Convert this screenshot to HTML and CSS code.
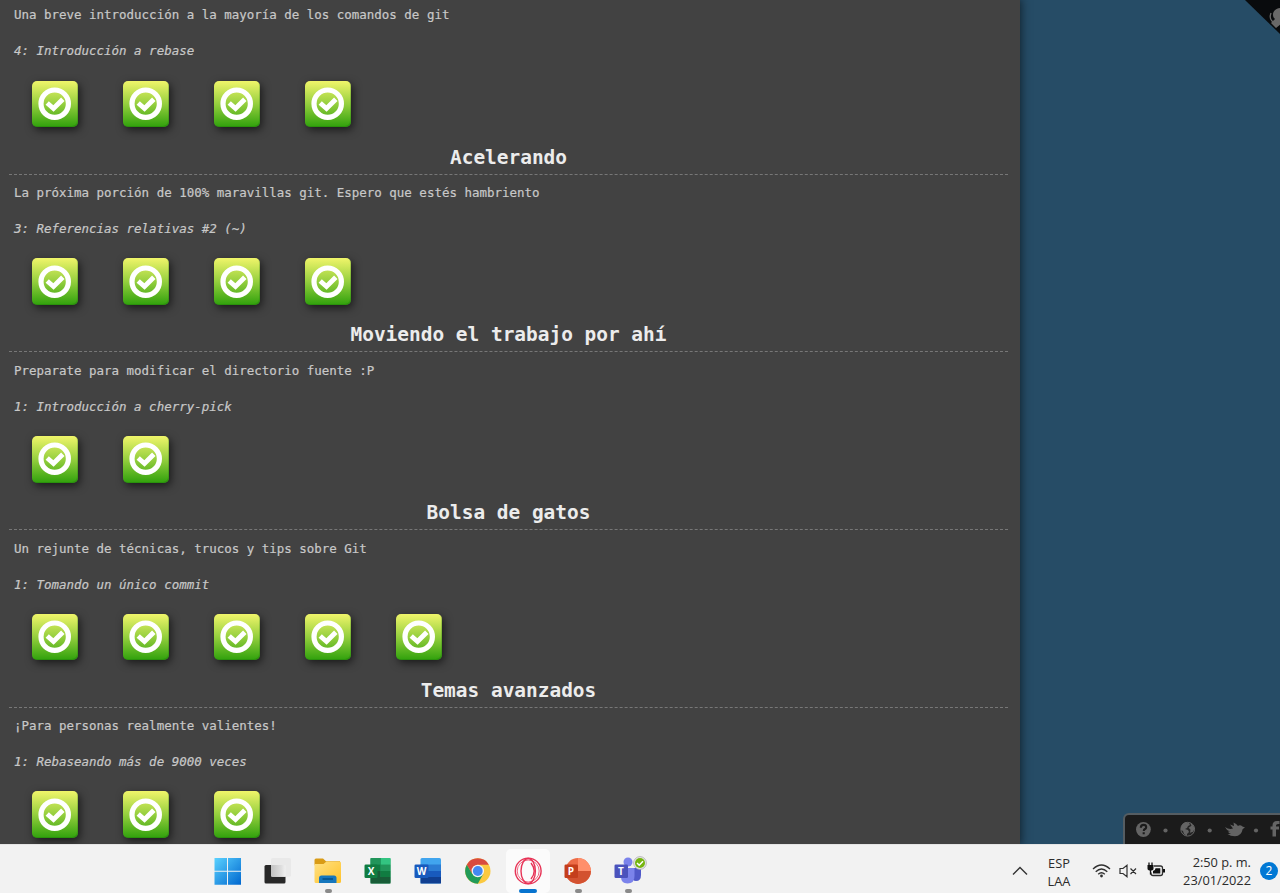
FILE: index.html
```
<!DOCTYPE html>
<html lang="es">
<head>
<meta charset="utf-8">
<title>Learn Git Branching</title>
<link rel="stylesheet" href="styles.css">
</head>
<body>
<svg class="defs" width="0" height="0">
  <symbol id="check" viewBox="0 0 34 34">
    <circle cx="16.700" cy="16.700" r="13.700" fill="none" stroke="#fff" stroke-width="5.200"/>
    <path d="M9.200 16l6.300 5.500 9.300-9.300" fill="none" stroke="#fff" stroke-width="4.900"/>
  </symbol>
</svg>
<div class="page">
  <main class="levels" id="levels">
    <section class="sequence first">
      <p class="about">Una breve introducción a la mayoría de los comandos de git</p>
      <p class="current">4: Introducción a rebase</p>
      <div class="icons"><i class="level"><svg><use href="#check"/></svg></i><i class="level"><svg><use href="#check"/></svg></i><i class="level"><svg><use href="#check"/></svg></i><i class="level"><svg><use href="#check"/></svg></i></div>
    </section>
    <section class="sequence">
      <h2>Acelerando</h2>
      <p class="about">La próxima porción de 100% maravillas git. Espero que estés hambriento</p>
      <p class="current">3: Referencias relativas #2 (~)</p>
      <div class="icons"><i class="level"><svg><use href="#check"/></svg></i><i class="level"><svg><use href="#check"/></svg></i><i class="level"><svg><use href="#check"/></svg></i><i class="level"><svg><use href="#check"/></svg></i></div>
    </section>
    <section class="sequence">
      <h2>Moviendo el trabajo por ahí</h2>
      <p class="about">Preparate para modificar el directorio fuente :P</p>
      <p class="current">1: Introducción a cherry-pick</p>
      <div class="icons"><i class="level"><svg><use href="#check"/></svg></i><i class="level"><svg><use href="#check"/></svg></i></div>
    </section>
    <section class="sequence">
      <h2>Bolsa de gatos</h2>
      <p class="about">Un rejunte de técnicas, trucos y tips sobre Git</p>
      <p class="current">1: Tomando un único commit</p>
      <div class="icons"><i class="level"><svg><use href="#check"/></svg></i><i class="level"><svg><use href="#check"/></svg></i><i class="level"><svg><use href="#check"/></svg></i><i class="level"><svg><use href="#check"/></svg></i><i class="level"><svg><use href="#check"/></svg></i></div>
    </section>
    <section class="sequence">
      <h2>Temas avanzados</h2>
      <p class="about">¡Para personas realmente valientes!</p>
      <p class="current">1: Rebaseando más de 9000 veces</p>
      <div class="icons"><i class="level"><svg><use href="#check"/></svg></i><i class="level"><svg><use href="#check"/></svg></i><i class="level"><svg><use href="#check"/></svg></i></div>
    </section>
  </main>
  <aside class="canvas">
    <svg class="ribbon" width="36" height="36" viewBox="0 0 36 36"><path d="M0 0H36V35z" fill="#090b0d"/><path d="M36 8c-5 0-8 3-8 7 0 2 1 3 2 4l-4 4 5 5 5-4z" fill="#696969"/><path d="M26 13q-2 5 1 8l3 2" fill="none" stroke="#696969" stroke-width="1.300"/></svg>
    <nav class="social">
      <svg width="155" height="30" viewBox="0 0 155 30">
        <circle cx="18.400" cy="15.500" r="7.400" fill="#646464"/>
        <path d="M15.800 13.700q0-2.800 2.800-2.800 2.600 0 2.600 2.300 0 1.200-1.500 2-.9.600-.9 1.700M18.700 18.200v2.100" fill="none" stroke="#1b1b1b" stroke-width="2.100"/>
        <circle cx="62.700" cy="15.200" r="6.900" fill="#242424" stroke="#646464" stroke-width="1"/>
        <path d="M56 13q1-4 5-5l3 1 1 2-2 1-1 2-2 1 3 1 1 2-2 2v2l-3-2-1-3-2-1zM65 8.700q4 2 4.500 6l-1.500 3-3 1 .5-3-2-2 3-2z" fill="#646464"/>
        <path d="M100 13q4 2.800 8 1.500l-3-4 4 1.500-.5-3.500q3 1 4.500 3.500 2-1.500 4.500.5l2.500 1-2.300 1.500q-1.200 7-7.700 7.300-4.500 0-7.500-2.300h3.500q-2.500-1-3-2.500h2q-3.500-1-5-4.500z" fill="#646464"/>
        <path d="M147.500 22.500v-7h-2v-3h2v-1q0-4.500 4.500-4.500h2.500v3h-1.500q-2 0-2 1.500v1h3v3h-3v7z" fill="#646464"/>
        <g fill="#646464"><circle cx="40.500" cy="16.500" r="2.100"/><circle cx="84.700" cy="16.500" r="2.100"/><circle cx="131" cy="16.500" r="2.100"/></g>
      </svg>
    </nav>
  </aside>
</div>
<footer class="taskbar">
  <div class="apps">
    <span class="app"><svg viewBox="0 0 50 42"><defs><linearGradient id="win" x2="1" y2="1"><stop stop-color="#5ad2ff"/><stop offset="1" stop-color="#0067cf"/></linearGradient></defs><path d="M12.500 8h12.500v12.700h-12.500zM26 8h13v12.700h-13zM12.500 21.700h12.500v13h-12.500zM26 21.700h13v13h-13z" fill="url(#win)"/></svg></span>
    <span class="app"><svg viewBox="0 0 50 42"><defs><linearGradient id="tv" x2="1"><stop stop-color="#c2c2c2"/><stop offset=".7" stop-color="#dedede"/><stop offset="1" stop-color="#f0f0f0"/></linearGradient></defs><rect x="12.500" y="15" width="21" height="18.500" rx="1.500" fill="#282828"/><rect x="19" y="8" width="20" height="18.700" rx="1.500" fill="#e9e9e9"/><path d="M19 15h14.500v11.700h-13q-1.500 0-1.500-1.500z" fill="url(#tv)"/></svg></span>
    <span class="app running"><svg viewBox="0 0 50 42"><defs><linearGradient id="fo" x2="1" y2="1"><stop stop-color="#ffe184"/><stop offset="1" stop-color="#ffc229"/></linearGradient></defs><path d="M12.500 10q0-1.500 1.500-1.500h7l3 2.700h14v4h-25.500z" fill="#d99b16"/><path d="M12.500 14h9l3-2.500h13q1.500 0 1.500 1.500v18.500q0 1.500-1.500 1.500h-23.500q-1.500 0-1.500-1.500z" fill="url(#fo)"/><path d="M17 33v-5q0-2.500 2.500-2.500h12.500q2.500 0 2.500 2.500v5z" fill="#1677bd"/><path d="M20.500 29h10.500" stroke="#075590" stroke-width="1.800"/></svg></span>
    <span class="app"><svg viewBox="0 0 50 42"><rect x="18.500" y="8" width="20" height="25.500" rx="1.500" fill="#20a366"/><path d="M18.500 8h10v6.500h-10zM29 14.500h9.500v6.500h-9.500z" fill="#21955a"/><path d="M29 8h9.500v6.500h-9.500z" fill="#33c481"/><path d="M18.500 14.500h10v6.500h-10zM28.500 21h10v6h-10z" fill="#107c41"/><path d="M18.500 21h10v12.500h-10zM28.500 27h10v6.500h-10z" fill="#185c37"/><rect x="12.500" y="14.500" width="13" height="13.500" rx="1.300" fill="#107c41"/><text x="19" y="25" class="tile">X</text></svg></span>
    <span class="app"><svg viewBox="0 0 50 42"><rect x="18.500" y="8" width="20.500" height="25.500" rx="1.500" fill="#41a5ee"/><path d="M18.500 14.500h20.500v7h-20.500z" fill="#2b7cd3"/><path d="M18.500 21h20.500v7h-20.500z" fill="#185abd"/><path d="M18.500 27h20.500v6.500h-20.500z" fill="#103f91"/><rect x="12.500" y="14.500" width="14" height="13.500" rx="1.300" fill="#185abd"/><text x="19.500" y="25" class="tile">W</text></svg></span>
    <span class="app"><svg viewBox="0 0 50 42"><circle cx="25.800" cy="21" r="12.700" fill="#fbc940"/><path d="M14.800 14.700A12.700 12.700 0 0 1 36.800 14.700H25.800L20.300 24z" fill="#d94b3f"/><path d="M14.800 14.700A12.700 12.700 0 0 0 25.800 33.700L31.300 24H20.300z" fill="#219b59"/><circle cx="25.800" cy="21" r="6.200" fill="#f4f4f4"/><circle cx="25.800" cy="21" r="4.900" fill="#4389f4"/></svg></span>
    <span class="app active"><svg viewBox="0 0 50 42"><g fill="none" stroke="#e73356" stroke-width="1.400"><circle cx="26.200" cy="21" r="12.900"/><circle cx="26.200" cy="21" r="11" stroke="#f16b85" stroke-width="1"/><ellipse cx="26.200" cy="21" rx="7.200" ry="12.500"/><path d="M29 13q6.500 8 0 16"/></g></svg></span>
    <span class="app running"><svg viewBox="0 0 50 42"><circle cx="26" cy="21" r="12.900" fill="#ed6c47"/><path d="M26 8.100A12.900 12.900 0 0 1 38.900 21H26z" fill="#ff8f6b"/><path d="M13.100 21h25.800A12.900 12.900 0 0 1 13.100 21z" fill="#d35230"/><rect x="12.500" y="14.500" width="13.500" height="13.500" rx="1.300" fill="#c43e1c"/><text x="19" y="25" class="tile">P</text></svg></span>
    <span class="app running"><svg viewBox="0 0 50 42"><circle cx="26" cy="12" r="4.500" fill="#7b83eb"/><path d="M31 18h8v7q0 6-5 6-4 0-4-4z" fill="#5059c9"/><path d="M19 18h13.500v8q0 7.500-7 7.500-6.500 0-6.500-7z" fill="#7b83eb"/><rect x="12.500" y="14.500" width="13.500" height="13.500" rx="1.300" fill="#4b53bc"/><text x="19" y="25" class="tile">T</text><circle cx="38" cy="13" r="6.400" fill="#e6e6e6" stroke="#a5a5a5" stroke-width=".7"/><circle cx="38" cy="13" r="5" fill="#75b50e"/><path d="M35 13l2.200 2.200 3.800-4" stroke="#fff" stroke-width="1.500" fill="none"/></svg></span>
  </div>
  <div class="tray">
    <svg class="chevron" width="16" height="10" viewBox="0 0 16 10"><path d="M1 8.500l7-7 7 7" fill="none" stroke="#333" stroke-width="1.400"/></svg>
    <div class="lang">ESP<br>LAA</div>
    <svg class="status" width="76" height="20" viewBox="0 0 76 20" fill="none" stroke="#303030" stroke-width="1.300">
      <path d="M1 8q8.500-8 17 0M3.700 10.700q5.800-5.500 11.600 0M6.200 13.300q3.300-3 6.600 0"/><circle cx="9.500" cy="15" r="1.400" fill="#303030" stroke="none"/>
      <path d="M28 7.500h3l4-3.200v11.500l-4-3.300h-3zM38.500 7.500l5.500 5.500M44 7.500l-5.500 5.500" stroke-width="1.200"/>
      <path d="M62 5h6.500q2 0 2 2v5.500q0 2-2 2h-7.500q-2 0-2-2v-1"/>
      <path d="M63.500 7.200h4.800v5.200h-7.300v-2.500q2.500-.5 2.500-2.700zM71 8h2v3.500h-2zM55.500 4h6v3.500q0 2-3 2t-3-2z" fill="#111" stroke="none"/>
      <path d="M57 1.500v3M60 1.500v3M58.500 8.500v5" stroke="#111" stroke-width="1.300"/>
    </svg>
    <div class="clock">2:50 p. m.<br>23/01/2022</div>
    <span class="count">2</span>
  </div>
</footer>
</body>
</html>
```
FILE: styles.css
```
* { box-sizing: border-box; }
body { margin: 0; width: 1280px; height: 893px; overflow: hidden; display: flex; flex-direction: column; background: #f2f2f2; }
.defs { position: absolute; }
.page { height: 844px; flex: none; display: flex; overflow: hidden; background: #264c66; }
.levels { position: relative; z-index: 1; width: 1020px; flex: none; padding: 0 12px 0 9px; background: #424242; box-shadow: 0 0 9px 1px #10212d; font-family: "DejaVu Sans Mono", monospace; color: #c8c8c8; }
.sequence { height: 177.700px; }
.sequence.first { height: 137.600px; padding-top: 1px; }
h2 { margin: 0; height: 37px; padding-top: 6px; border-bottom: 1px dashed #777; font-size: 19.450px; line-height: 28px; text-align: center; color: #ececec; }
.about, .current { margin: 0; padding-left: 5px; font-size: 12.475px; line-height: 20px; white-space: nowrap; -webkit-text-stroke: .2px #c8c8c8; }
.about { padding-top: 8.600px; }
.first .about { padding-top: 4px; }
.current { padding-top: 16px; font-style: italic; }
.icons { display: flex; gap: 45.100px; padding: 19.200px 0 0 22.700px; }
.first .icons { padding-top: 19.800px; }
.level { display: grid; place-items: center; width: 45.900px; height: 46.700px; border-radius: 5px; background: linear-gradient(#f0f56a, #95cf3e 50%, #30a10c); box-shadow: 2px 3px 9px rgba(0, 0, 0, .6), inset -1px -1px 0 rgba(20, 100, 10, .25); }
.level svg { width: 34px; height: 34px; }
.canvas { position: relative; flex: 1; }
.ribbon { position: absolute; right: 0; top: 0; transform: translateX(1px); }
.social { position: absolute; right: 0; bottom: 0; width: 157px; height: 31px; overflow: hidden; border: 2px solid #555d62; border-width: 2px 0 0 2px; border-radius: 6px 0 0 0; background: #1b1b1b; }
.social svg { display: block; margin-top: -1px; }
.taskbar { height: 49px; display: flex; background: #f2f2f2; border-top: 1px solid #e5e5e5; font-family: "Open Sans", sans-serif; color: #2b2b2b; }
.apps { display: flex; padding: 5px 0 0 202px; }
.app { position: relative; width: 50px; height: 43px; }
.app svg { display: block; width: 50px; height: 42px; position: relative; }
.app.active::before { content: ""; position: absolute; left: 4px; top: -1px; width: 44px; height: 44px; border-radius: 5px; background: #fbfbfb; }
.app.active::after, .app.running::after { content: ""; position: absolute; left: 22.500px; top: 39px; width: 7px; height: 4px; border-radius: 2px; background: #8a8a8a; }
.app.active::after { left: 17px; width: 18px; background: #0874cf; }
.tile { font: bold 10px "Open Sans", sans-serif; fill: #fff; text-anchor: middle; }
.tray { margin-left: auto; display: flex; align-items: flex-start; font-size: 12.800px; line-height: 18px; }
.chevron { margin: 21px 19px 0 0; }
.lang { width: 24px; padding-top: 9px; text-align: center; white-space: nowrap; }
.status { margin: 16px 0 0 21px; }
.clock { width: 83px; padding-top: 8px; text-align: right; white-space: nowrap; }
.count { margin: 17px 2px 0 9px; width: 18px; height: 18px; border-radius: 50%; background: #0078d4; color: #fff; text-align: center; font-size: 12px; line-height: 18px; }
```
